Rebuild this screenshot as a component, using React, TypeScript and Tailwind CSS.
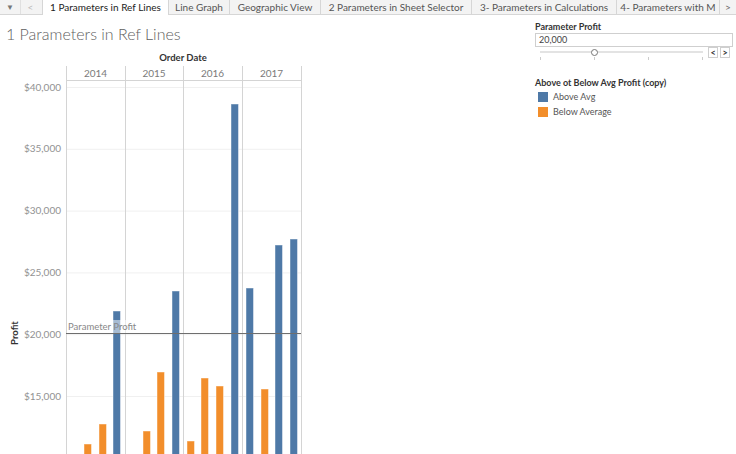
const tabs = [
  { label: "1 Parameters in Ref Lines", w: "w-[126px]", active: true },
  { label: "Line Graph", w: "w-[61px]" },
  { label: "Geographic View", w: "w-[91px]" },
  { label: "2 Parameters in Sheet Selector", w: "w-[151px]" },
  { label: "3- Parameters in Calculations", w: "w-[145px]" },
  { label: "4- Parameters with M", w: "w-[103px]" },
]

const BLUE = "#4e79a7"
const ORANGE = "#f28e2b"

// bars: x position, top y, colour (bottom is cut by the window)
const bars = [
  { x: 84, top: 444, c: ORANGE },
  { x: 99, top: 424, c: ORANGE },
  { x: 113, top: 311, c: BLUE },
  { x: 143, top: 431, c: ORANGE },
  { x: 157, top: 372, c: ORANGE },
  { x: 172, top: 291, c: BLUE },
  { x: 187, top: 441, c: ORANGE },
  { x: 201, top: 378, c: ORANGE },
  { x: 216, top: 386, c: ORANGE },
  { x: 231, top: 104, c: BLUE },
  { x: 246, top: 288, c: BLUE },
  { x: 261, top: 389, c: ORANGE },
  { x: 275, top: 245, c: BLUE },
  { x: 290, top: 239, c: BLUE },
]

const ticks = [40000, 35000, 30000, 25000, 20000, 15000]
const yOf = (v: number) => 87 + (40000 - v) * 0.01236
const years = ["2014", "2015", "2016", "2017"]
const cols = [66, 125, 183, 242, 301]

const Chart = () => {
  return (
    <svg width="310" height="404" viewBox="0 50 310 404" className="block">
      <text x="183" y="61" textAnchor="middle" fontSize="9.5" fontWeight="700" fill="#333">
        Order Date
      </text>
      {years.map((y, i) => (
        <text key={y} x={(cols[i] + cols[i + 1]) / 2} y="77" textAnchor="middle" fontSize="10" fill="#7a7a7a">
          {y}
        </text>
      ))}
      <line x1="66" y1="80.5" x2="301" y2="80.5" stroke="#d4d4d4" />
      {ticks.map((t) => (
        <g key={t}>
          <line x1="66" x2="301" y1={yOf(t) + 0.5} y2={yOf(t) + 0.5} stroke="#f0f0f0" />
          <text x="61" y={yOf(t) + 3.5} textAnchor="end" fontSize="10" fill="#929292">
            ${t.toLocaleString("en-US")}
          </text>
        </g>
      ))}
      {cols.map((c) => (
        <line key={c} x1={c + 0.5} x2={c + 0.5} y1="66" y2="454" stroke="#d4d4d4" />
      ))}
      {bars.map((b, i) => (
        <rect key={i} x={b.x} y={b.top} width="7.5" height={460 - b.top} fill={b.c} stroke="#ffffff" strokeOpacity="0.45" strokeWidth="1" />
      ))}
      {/* ref line label sits on a faded box */}
      <rect x="67" y="320" width="72" height="13" fill="#ffffff" fillOpacity="0.5" />
      <line x1="66" x2="301" y1="333.5" y2="333.5" stroke="#6e6e6e" strokeWidth="1" />
      <text x="68" y="330" fontSize="9.5" fill="#888">
        Parameter Profit
      </text>
      <text x="0" y="0" transform="translate(18 333) rotate(-90)" textAnchor="middle" fontSize="9.5" fontWeight="700" fill="#333">
        Profit
      </text>
    </svg>
  )
}

export default function App() {
  return (
    <div className="w-[736px] h-[454px] overflow-hidden bg-white font-['Lato','Open_Sans',sans-serif] text-[#333]">
      {/* sheet tabs */}
      <div className="flex h-[15px] bg-[#f3f3f3] border-b border-[#d6d6d6] text-[10px] leading-[14px]">
        <div className="w-[20px] flex items-center justify-center text-[#777] text-[8px]">▼</div>
        <div className="w-[20px] flex items-center justify-center text-[#bbb] border-l border-[#e0e0e0]">&lt;</div>
        <div className="w-[3px] border-r border-[#d6d6d6]" />
        {tabs.map((t) => (
          <div
            key={t.label}
            className={`${t.w} shrink-0 overflow-hidden whitespace-nowrap text-center border-r border-[#d6d6d6] ${
              t.active ? "bg-white h-[15px] text-[#222]" : "text-[#555]"
            }`}
          >
            {t.label}
          </div>
        ))}
        <div className="flex-1 flex items-center justify-center text-[#666] bg-[#f3f3f3]">&gt;</div>
      </div>

      <div className="flex">
        <div className="w-[535px]">
          <div className="h-[35px] pl-[6px] pt-[9px] text-[16px] leading-[20px] text-[#5f5f5f] font-light">
            1 Parameters in Ref Lines
          </div>
          <Chart />
        </div>

        <div className="w-[201px] pr-[3px]">
          <div className="mt-[6px] text-[9px] leading-[12px] font-bold text-[#333]">Parameter Profit</div>
          <div className="h-[14px] border border-[#cfcfcf] px-[3px] text-[9px] leading-[12px] text-[#444]">20,000</div>
          <div className="flex items-start h-[14px]">
            <div className="relative w-[163px] ml-[5px] h-[14px]">
              <div className="absolute left-0 right-0 top-[4px] h-[2px] bg-[#e3e3e3]" />
              <div className="absolute left-[51px] top-[2px] w-[7px] h-[7px] rounded-full border border-[#777] bg-white" />
              <div className="absolute left-0 top-[10px] w-px h-[3px] bg-[#ccc]" />
              <div className="absolute left-[54px] top-[10px] w-px h-[3px] bg-[#ccc]" />
              <div className="absolute left-[108px] top-[10px] w-px h-[3px] bg-[#ccc]" />
              <div className="absolute right-0 top-[10px] w-px h-[3px] bg-[#ccc]" />
            </div>
            <div className="ml-[5px] flex gap-[2px]">
              <div className="w-[10px] h-[11px] border border-[#cfcfcf] text-[9px] leading-[9px] flex items-center justify-center text-[#333] font-bold">&lt;</div>
              <div className="w-[10px] h-[11px] border border-[#cfcfcf] text-[9px] leading-[9px] flex items-center justify-center text-[#333] font-bold">&gt;</div>
            </div>
          </div>

          <div className="mt-[16px] text-[9px] leading-[12px] font-bold text-[#333]">Above ot Below Avg Profit (copy)</div>
          <div className="mt-[3px] flex flex-col gap-[5px] text-[9px] leading-[10px] text-[#555]">
            <div className="flex items-center gap-[5px] pl-[3px]">
              <div className="w-[10px] h-[10px] bg-[#4e79a7]" />
              Above Avg
            </div>
            <div className="flex items-center gap-[5px] pl-[3px]">
              <div className="w-[10px] h-[10px] bg-[#f28e2b]" />
              Below Average
            </div>
          </div>
        </div>
      </div>
    </div>
  )
}
